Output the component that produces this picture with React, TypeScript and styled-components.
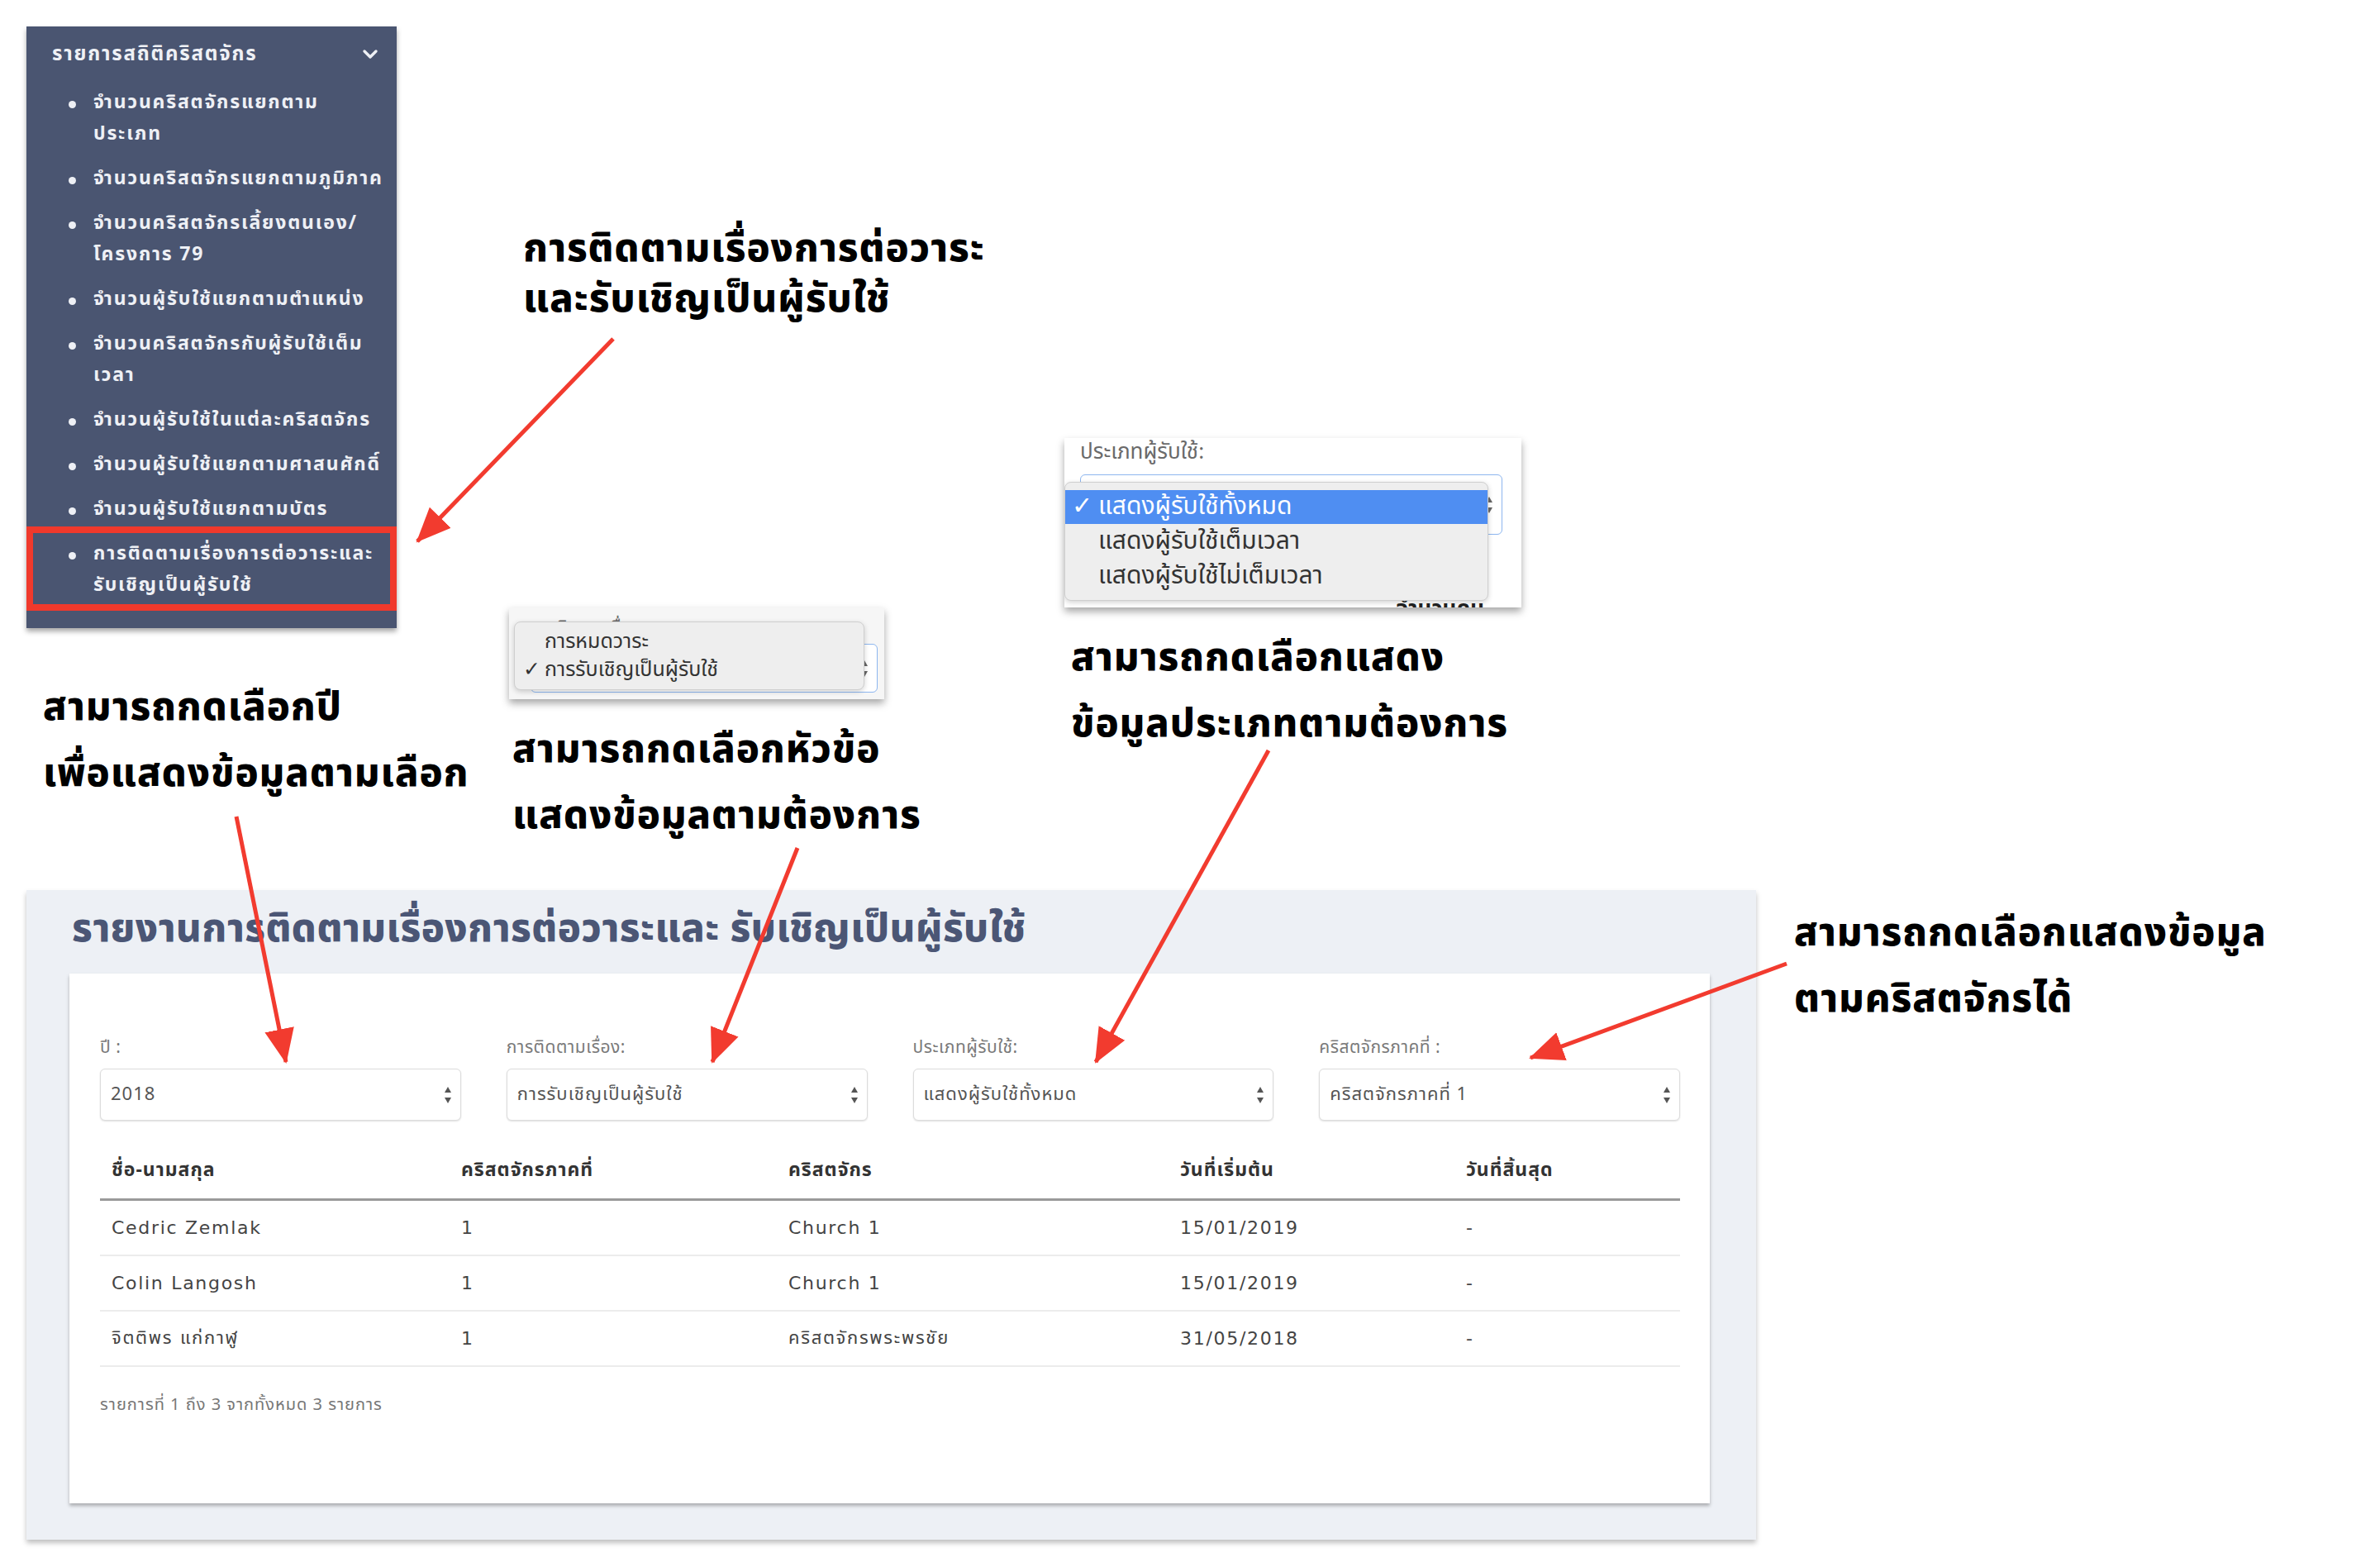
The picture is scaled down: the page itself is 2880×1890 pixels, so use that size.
import styled, { createGlobalStyle } from 'styled-components';

const GlobalStyle = createGlobalStyle`
  html, body {
    margin: 0;
    padding: 0;
    background: #ffffff;
  }
  body {
    font-family: "Noto Sans Thai", "Noto Sans", "DejaVu Sans", sans-serif;
  }
`;

const THAI = `"Noto Sans Thai", "Noto Sans", "DejaVu Sans", sans-serif`;

const Page = styled.div`
  position: relative;
  width: 2880px;
  height: 1890px;
  box-sizing: border-box;
  padding: 32px 0 0 32px;
  overflow: hidden;
  font-family: ${THAI};
`;

/* ---------- sidebar ---------- */

const Sidebar = styled.nav`
  width: 448px;
  height: 728px;
  box-sizing: border-box;
  padding-top: 14px;
  background: #4a5571;
  color: #eef0f5;
  box-shadow: 0 4px 6px rgba(0, 0, 0, 0.35);
`;

const SidebarTitle = styled.div`
  display: flex;
  align-items: center;
  justify-content: space-between;
  height: 40px;
  padding: 0 22px 0 31px;
  font-size: 24px;
  font-weight: 700;
  letter-spacing: 1.8px;
`;

const MenuList = styled.ul`
  list-style: none;
  margin: 11px 0 0;
  padding: 0;
`;

const MenuItem = styled.li<{ $active?: boolean }>`
  position: relative;
  padding: ${(p) => (p.$active ? '14px 0 12px 81px' : '8px 0 8px 81px')};
  margin-top: ${(p) => (p.$active ? '-6px' : '0')};
  box-shadow: ${(p) => (p.$active ? 'inset 0 0 0 8px #f0392c' : 'none')};
  font-size: 23px;
  font-weight: 700;
  line-height: 38px;
  letter-spacing: 1.8px;
  white-space: nowrap;

  &::before {
    content: '';
    position: absolute;
    left: 51px;
    top: ${(p) => (p.$active ? '31px' : '25px')};
    width: 9px;
    height: 9px;
    border-radius: 50%;
    background: #eef0f5;
  }
`;

const Line = styled.div``;

/* ---------- report panel ---------- */

const Panel = styled.section`
  display: flex;
  flex-direction: column;
  margin-top: 317px;
  width: 2093px;
  height: 786px;
  box-sizing: border-box;
  padding: 0 56px 44px 52px;
  background: #edf0f5;
  box-shadow: 0 4px 6px rgba(0, 0, 0, 0.25);
`;

const PanelTitle = styled.h1`
  margin: 0;
  height: 101px;
  box-sizing: border-box;
  padding: 18px 0 0 3px;
  font-size: 47px;
  line-height: 60px;
  font-weight: 800;
  color: #4b5675;
  letter-spacing: 0.5px;
`;

const Card = styled.div`
  flex: 1;
  background: #ffffff;
  padding: 74px 36px 0 37px;
  box-shadow: 0 3px 4px rgba(0, 0, 0, 0.28);
`;

const Filters = styled.div`
  display: grid;
  grid-template-columns: repeat(4, 1fr);
  column-gap: 55px;
`;

const Field = styled.div`
  display: flex;
  flex-direction: column;
`;

const FieldLabel = styled.label`
  font-size: 21px;
  line-height: 32px;
  margin-bottom: 9px;
  color: #7a7a7a;
  letter-spacing: 0.5px;
`;

const SelectBox = styled.div<{ $h?: number; $focus?: boolean }>`
  display: flex;
  align-items: center;
  justify-content: space-between;
  height: ${(p) => p.$h ?? 63}px;
  box-sizing: border-box;
  padding: 0 10px 0 12px;
  border: ${(p) => (p.$focus ? '1.5px solid #8db6ef' : '1px solid #dcdcdc')};
  border-radius: 6px;
  background: #ffffff;
  box-shadow: ${(p) => (p.$focus ? 'none' : '0 1px 2px rgba(0, 0, 0, 0.12)')};
  font-size: 22px;
  color: #555;
  letter-spacing: 1px;
`;

const Table = styled.table`
  width: 100%;
  margin-top: 26px;
  border-collapse: collapse;
  table-layout: fixed;
`;

const Th = styled.th<{ $w?: number }>`
  box-sizing: border-box;
  width: ${(p) => (p.$w ? `${p.$w}px` : 'auto')};
  height: 69px;
  padding: 0 14px;
  text-align: left;
  font-size: 23px;
  font-weight: 700;
  color: #333;
  letter-spacing: 1px;
  border-bottom: 3px solid #9a9a9a;
`;

const Td = styled.td`
  height: 65px;
  padding: 0 14px;
  font-family: "DejaVu Sans", ${THAI};
  font-size: 22px;
  color: #444;
  letter-spacing: 1.7px;
  border-bottom: 2px solid #ececec;
`;

const Footer = styled.div`
  margin-top: 31px;
  font-size: 20px;
  line-height: 30px;
  color: #777;
  letter-spacing: 1px;
`;

/* ---------- callouts drawn over the screenshot ---------- */

const Note = styled.div<{ $x: number; $y: number; $lh: number }>`
  position: absolute;
  left: ${(p) => p.$x}px;
  top: ${(p) => p.$y}px;
  font-size: 47px;
  font-weight: 800;
  line-height: ${(p) => p.$lh}px;
  color: #000;
  white-space: nowrap;
  letter-spacing: 1px;
`;

const Popup = styled.div<{ $x: number; $y: number; $w: number; $h: number; $bg: string }>`
  position: absolute;
  left: ${(p) => p.$x}px;
  top: ${(p) => p.$y}px;
  width: ${(p) => p.$w}px;
  height: ${(p) => p.$h}px;
  box-sizing: border-box;
  overflow: hidden;
  background: ${(p) => p.$bg};
  box-shadow: 0 5px 9px rgba(0, 0, 0, 0.35);
`;

const PopupBody = styled.div<{ $pad: string }>`
  padding: ${(p) => p.$pad};
`;

const PopupLabel = styled.div<{ $size: number; $lh: number; $mb: number }>`
  font-size: ${(p) => p.$size}px;
  line-height: ${(p) => p.$lh}px;
  margin-bottom: ${(p) => p.$mb}px;
  color: #6a6a6a;
`;

const DropMenu = styled.div<{ $x: number; $y: number; $w: number; $h: number; $pad: number }>`
  position: absolute;
  left: ${(p) => p.$x}px;
  top: ${(p) => p.$y}px;
  width: ${(p) => p.$w}px;
  height: ${(p) => p.$h}px;
  box-sizing: border-box;
  padding-top: ${(p) => p.$pad}px;
  background: #eeeeee;
  border: 1px solid #cfcfcf;
  border-radius: 8px;
  box-shadow: 0 2px 6px rgba(0, 0, 0, 0.18);
  overflow: hidden;
`;

const DropOption = styled.div<{ $h: number; $size: number; $indent: number; $selected?: boolean }>`
  position: relative;
  height: ${(p) => p.$h}px;
  line-height: ${(p) => p.$h}px;
  padding-left: ${(p) => p.$indent}px;
  font-size: ${(p) => p.$size}px;
  color: ${(p) => (p.$selected ? '#ffffff' : '#333333')};
  background: ${(p) => (p.$selected ? '#4f8ef2' : 'transparent')};
  white-space: nowrap;
`;

const Check = styled.span<{ $x: number }>`
  position: absolute;
  left: ${(p) => p.$x}px;
  top: 0;
`;

const Peek = styled.div`
  margin-top: 72px;
  padding-right: 22px;
  text-align: right;
  font-size: 26px;
  font-weight: 700;
  line-height: 36px;
  color: #222;
`;

const Overlay = styled.svg`
  position: absolute;
  left: 0;
  top: 0;
  pointer-events: none;
`;

function UpDown({ color = '#555' }: { color?: string }) {
  return (
    <svg width="10" height="24" viewBox="0 0 10 24">
      <path d="M5 2 L9 9 L1 9 Z" fill={color} />
      <path d="M5 22 L9 15 L1 15 Z" fill={color} />
    </svg>
  );
}

function Chevron() {
  return (
    <svg width="20" height="14" viewBox="0 0 20 14">
      <path d="M3 3 L10 10 L17 3" stroke="#eef0f5" strokeWidth="3.4" fill="none" strokeLinecap="round" strokeLinejoin="round" />
    </svg>
  );
}

const menu: { lines: string[]; active?: boolean }[] = [
  { lines: ['จำนวนคริสตจักรแยกตาม', 'ประเภท'] },
  { lines: ['จำนวนคริสตจักรแยกตามภูมิภาค'] },
  { lines: ['จำนวนคริสตจักรเลี้ยงตนเอง/', 'โครงการ 79'] },
  { lines: ['จำนวนผู้รับใช้แยกตามตำแหน่ง'] },
  { lines: ['จำนวนคริสตจักรกับผู้รับใช้เต็ม', 'เวลา'] },
  { lines: ['จำนวนผู้รับใช้ในแต่ละคริสตจักร'] },
  { lines: ['จำนวนผู้รับใช้แยกตามศาสนศักดิ์'] },
  { lines: ['จำนวนผู้รับใช้แยกตามบัตร'] },
  { lines: ['การติดตามเรื่องการต่อวาระและ', 'รับเชิญเป็นผู้รับใช้'], active: true },
];

const filters = [
  { label: 'ปี :', value: '2018' },
  { label: 'การติดตามเรื่อง:', value: 'การรับเชิญเป็นผู้รับใช้' },
  { label: 'ประเภทผู้รับใช้:', value: 'แสดงผู้รับใช้ทั้งหมด' },
  { label: 'คริสตจักรภาคที่ :', value: 'คริสตจักรภาคที่ 1' },
];

const columns = [
  { title: 'ชื่อ-นามสกุล', w: 423 },
  { title: 'คริสตจักรภาคที่', w: 396 },
  { title: 'คริสตจักร', w: 474 },
  { title: 'วันที่เริ่มต้น', w: 346 },
  { title: 'วันที่สิ้นสุด' },
];

const rows = [
  ['Cedric Zemlak', '1', 'Church 1', '15/01/2019', '-'],
  ['Colin Langosh', '1', 'Church 1', '15/01/2019', '-'],
  ['จิตติพร แก่กาฬู', '1', 'คริสตจักรพระพรชัย', '31/05/2018', '-'],
];

const arrows = [
  [742, 410, 505, 655],
  [286, 988, 346, 1285],
  [965, 1026, 862, 1285],
  [1535, 908, 1326, 1285],
  [2162, 1166, 1852, 1280],
];

export default function App() {
  return (
    <Page>
      <GlobalStyle />

      <Sidebar>
        <SidebarTitle>
          <span>รายการสถิติคริสตจักร</span>
          <Chevron />
        </SidebarTitle>
        <MenuList>
          {menu.map((item, i) => (
            <MenuItem key={i} $active={item.active}>
              {item.lines.map((l) => (
                <Line key={l}>{l}</Line>
              ))}
            </MenuItem>
          ))}
        </MenuList>
      </Sidebar>

      <Panel>
        <PanelTitle>รายงานการติดตามเรื่องการต่อวาระและ รับเชิญเป็นผู้รับใช้</PanelTitle>
        <Card>
          <Filters>
            {filters.map((f) => (
              <Field key={f.label}>
                <FieldLabel>{f.label}</FieldLabel>
                <SelectBox>
                  <span>{f.value}</span>
                  <UpDown />
                </SelectBox>
              </Field>
            ))}
          </Filters>
          <Table>
            <thead>
              <tr>
                {columns.map((c) => (
                  <Th key={c.title} $w={c.w}>
                    {c.title}
                  </Th>
                ))}
              </tr>
            </thead>
            <tbody>
              {rows.map((r) => (
                <tr key={r[0]}>
                  {r.map((v, i) => (
                    <Td key={i}>{v}</Td>
                  ))}
                </tr>
              ))}
            </tbody>
          </Table>
          <Footer>รายการที่ 1 ถึง 3 จากทั้งหมด 3 รายการ</Footer>
        </Card>
      </Panel>

      {/* dropdown: การติดตามเรื่อง */}
      <Popup $x={616} $y={735} $w={454} $h={111} $bg="#f6f6f6">
        <PopupBody $pad="10px 8px 0 26px">
          <PopupLabel $size={21} $lh={30} $mb={4}>การติดตามเรื่อง:</PopupLabel>
          <SelectBox $h={59} $focus>
            <span />
            <UpDown color="#666" />
          </SelectBox>
        </PopupBody>
        <DropMenu $x={6} $y={17} $w={424} $h={83} $pad={6}>
          <DropOption $h={34} $size={25} $indent={36}>การหมดวาระ</DropOption>
          <DropOption $h={34} $size={25} $indent={36}>
            <Check $x={10}>✓</Check>
            การรับเชิญเป็นผู้รับใช้
          </DropOption>
        </DropMenu>
      </Popup>

      {/* dropdown: ประเภทผู้รับใช้ */}
      <Popup $x={1288} $y={530} $w={553} $h={205} $bg="#ffffff">
        <PopupBody $pad="0 23px 0 19px">
          <PopupLabel $size={26} $lh={34} $mb={10}>ประเภทผู้รับใช้:</PopupLabel>
          <SelectBox $h={73} $focus>
            <span />
            <UpDown color="#666" />
          </SelectBox>
          <Peek>จำนวนคน</Peek>
        </PopupBody>
        <DropMenu $x={0} $y={53} $w={513} $h={144} $pad={9}>
          <DropOption $h={41} $size={30} $indent={40} $selected>
            <Check $x={8}>✓</Check>
            แสดงผู้รับใช้ทั้งหมด
          </DropOption>
          <DropOption $h={42} $size={30} $indent={40}>แสดงผู้รับใช้เต็มเวลา</DropOption>
          <DropOption $h={42} $size={30} $indent={40}>แสดงผู้รับใช้ไม่เต็มเวลา</DropOption>
        </DropMenu>
      </Popup>

      <Note $x={633} $y={271} $lh={61}>
        การติดตามเรื่องการต่อวาระ
        <br />
        และรับเชิญเป็นผู้รับใช้
      </Note>
      <Note $x={52} $y={817} $lh={80}>
        สามารถกดเลือกปี
        <br />
        เพื่อแสดงข้อมูลตามเลือก
      </Note>
      <Note $x={620} $y={868} $lh={80}>
        สามารถกดเลือกหัวข้อ
        <br />
        แสดงข้อมูลตามต้องการ
      </Note>
      <Note $x={1296} $y={757} $lh={80}>
        สามารถกดเลือกแสดง
        <br />
        ข้อมูลประเภทตามต้องการ
      </Note>
      <Note $x={2171} $y={1090} $lh={80}>
        สามารถกดเลือกแสดงข้อมูล
        <br />
        ตามคริสตจักรได้
      </Note>

      <Overlay width="2880" height="1890" viewBox="0 0 2880 1890">
        <defs>
          <marker id="head" markerUnits="userSpaceOnUse" markerWidth="44" markerHeight="40" refX="40" refY="20" orient="auto">
            <path d="M0 2 L42 20 L0 38 Z" fill="#f23b2f" />
          </marker>
        </defs>
        {arrows.map(([x1, y1, x2, y2], i) => (
          <line key={i} x1={x1} y1={y1} x2={x2} y2={y2} stroke="#f23b2f" strokeWidth="5" markerEnd="url(#head)" />
        ))}
      </Overlay>
    </Page>
  );
}
